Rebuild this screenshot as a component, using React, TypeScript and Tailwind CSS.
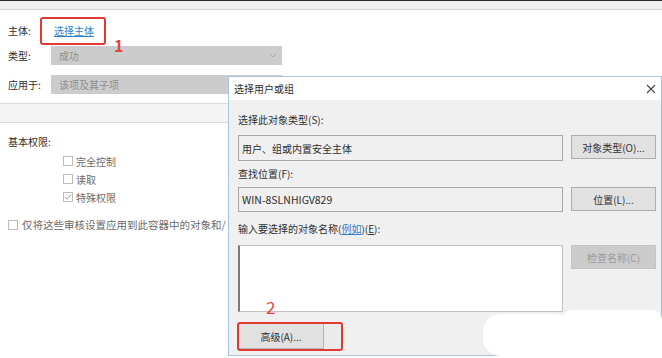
import React from "react";

const font = { fontFamily: '"Noto Sans CJK SC", "Noto Sans", sans-serif' };

const Check = ({ checked = false }: { checked?: boolean }) => (
  <span className="flex h-[10px] w-[10px] shrink-0 items-center justify-center border border-[#bcbcbc] bg-white">
    {checked && (
      <svg width="8" height="8" viewBox="0 0 8 8">
        <path d="M1 4.2 L3 6.2 L7 1.6" fill="none" stroke="#9a9a9a" strokeWidth="1" />
      </svg>
    )}
  </span>
);

const Btn = ({ children, disabled = false }: { children: React.ReactNode; disabled?: boolean }) => (
  <div
    className={
      disabled
        ? "flex h-[24px] w-[85px] items-center justify-center border border-[#c4c4c4] bg-[#cccccc] text-[#9a9a9a]"
        : "flex h-[24px] w-[85px] items-center justify-center border border-[#adadad] bg-[#e1e1e1] text-[#333]"
    }
  >
    {children}
  </div>
);

export default function App() {
  return (
    <div className="relative h-[358px] w-[662px] overflow-hidden bg-white text-[10px] text-[#2e2e2e]" style={font}>
      {/* background window */}
      <div className="h-px bg-[#2b2b2b]" />
      <div className="h-[9px] border-b border-[#d4d4d4] bg-[#efefef]" />
      <div className="flex flex-col pl-[8px] pt-[10px] pb-[9px]">
        <div className="flex h-[20px] items-center">
          <span className="w-[46px]">主体:</span>
          <span className="text-[#2f7fd1] underline">选择主体</span>
        </div>
        <div className="mt-[6px] flex h-[19px] items-center">
          <span className="w-[43px]">类型:</span>
          <div className="flex h-[19px] w-[231px] items-center justify-between bg-[#cccccc] pl-[8px] pr-[5px] text-[#8c8c8c]">
            <span>成功</span>
            <svg width="8" height="5" viewBox="0 0 8 5">
              <path d="M0.5 0.5 L4 4 L7.5 0.5" fill="none" stroke="#a8a8a8" strokeWidth="1" />
            </svg>
          </div>
        </div>
        <div className="mt-[10px] flex h-[19px] items-center">
          <span className="w-[43px]">应用于:</span>
          <div className="flex h-[19px] w-[231px] items-center bg-[#cccccc] pl-[8px] text-[#8c8c8c]">
            <span>该项及其子项</span>
          </div>
        </div>
      </div>
      <div className="h-[20px] border-y border-[#d9d9d9] bg-[#f4f4f4]" />
      <div className="flex flex-col pl-[8px] pt-[11px]">
        <div className="flex h-[14px] items-center">基本权限:</div>
        <div className="mt-[4px] flex flex-col pl-[55px] text-[#6a6a6a]">
          <div className="flex h-[18px] items-center gap-[3px]">
            <Check />
            <span>完全控制</span>
          </div>
          <div className="flex h-[18px] items-center gap-[3px]">
            <Check />
            <span>读取</span>
          </div>
          <div className="flex h-[18px] items-center gap-[3px]">
            <Check checked />
            <span>特殊权限</span>
          </div>
        </div>
        <div className="mt-[10px] flex h-[18px] items-center gap-[4px] whitespace-nowrap text-[10.5px] text-[#6a6a6a]">
          <Check />
          <span>仅将这些审核设置应用到此容器中的对象和/</span>
        </div>
      </div>

      {/* dialog */}
      <div className="absolute left-[228px] top-[76px] flex h-[280px] w-[434px] flex-col border border-[#a9c4df] bg-[#f0f0f0]">
        <div className="flex h-[23px] items-center justify-between bg-white pl-[5px] pr-[5px]">
          <span>选择用户或组</span>
          <svg width="10" height="10" viewBox="0 0 10 10">
            <path d="M1 1 L9 9 M9 1 L1 9" stroke="#444" strokeWidth="1.1" />
          </svg>
        </div>
        <div className="flex flex-col pl-[9px] pr-[5px] pt-[12px]">
          <div className="flex h-[14px] items-center">选择此对象类型(S):</div>
          <div className="mt-[9px] flex items-start gap-[8px]">
            <div className="flex h-[26px] w-[325px] items-center border border-[#a7a7a7] bg-[#f0f0f0] pl-[3px]">
              用户、组或内置安全主体
            </div>
            <Btn>对象类型(O)...</Btn>
          </div>
          <div className="mt-[5px] flex h-[14px] items-center">查找位置(F):</div>
          <div className="mt-[7px] flex items-start gap-[8px]">
            <div className="flex h-[25px] w-[325px] items-center border border-[#a7a7a7] bg-[#f0f0f0] pl-[3px] text-[10.5px]">
              WIN-8SLNHIGV829
            </div>
            <Btn>位置(L)...</Btn>
          </div>
          <div className="mt-[9px] flex h-[14px] items-center">
            输入要选择的对象名称(<span className="text-[#2f7fd1] underline">例如</span>)(<span className="underline">E</span>):
          </div>
          <div className="mt-[10px] flex items-start gap-[8px]">
            <div className="h-[67px] w-[325px] border border-[#c2c2c2] border-l-2 border-l-[#7a7a7a] bg-white" />
            <Btn disabled>检查名称(C)</Btn>
          </div>
          <div className="mt-[11px] flex">
            <div className="flex h-[26px] w-[86px] items-center justify-center border border-[#b4b4b4] bg-[#e1e1e1]">
              高级(A)...
            </div>
            <div className="h-[26px] w-[18px] bg-[#ebebeb]" />
          </div>
        </div>
      </div>

      {/* annotations */}
      <div className="absolute left-[40px] top-[17px] h-[28px] w-[66px] rounded-[3px] border-2 border-[#e23a33]" />
      <div className="absolute left-[114px] top-[37px] text-[16px] font-bold leading-none text-[#e5473d]">1</div>
      <div className="absolute left-[266px] top-[298px] text-[17px] leading-none text-[#e5473d]">2</div>
      <div className="absolute left-[237px] top-[322px] h-[29px] w-[106px] rounded-[3px] border-2 border-[#e23a33]" />

      {/* white scribble */}
      <div className="absolute left-[483px] top-[314px] h-[42px] w-[90px] rounded-[18px] bg-white" />
      <div className="absolute left-[530px] top-[318px] h-[38px] w-[132px] rounded-l-[16px] bg-white" />
      <div className="absolute left-[562px] top-[310px] h-[20px] w-[100px] rounded-[10px] bg-white" />
    </div>
  );
}
